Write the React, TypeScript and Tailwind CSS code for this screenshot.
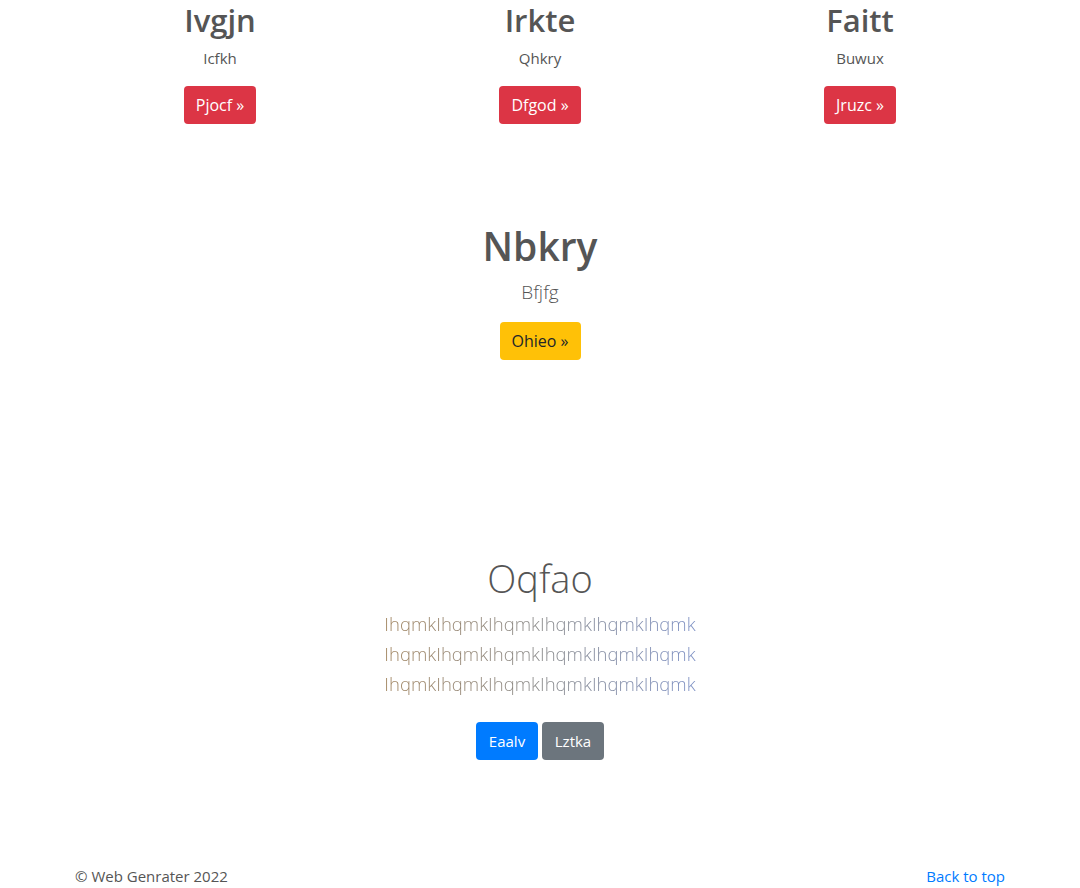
import React from 'react';

const features = [
  { title: 'Ivgjn', text: 'Icfkh', cta: 'Pjocf' },
  { title: 'Irkte', text: 'Qhkry', cta: 'Dfgod' },
  { title: 'Faitt', text: 'Buwux', cta: 'Jruzc' },
];

export default function App() {
  return (
    <div className="min-h-[888px] bg-white text-[#555] font-['Open_Sans',sans-serif] flex flex-col">
      {/* Feature columns */}
      <div className="mx-auto w-[960px] grid grid-cols-3">
        {features.map((f) => (
          <div key={f.title} className="flex flex-col items-center">
            <h2 className="text-[31px] font-semibold leading-[40px] text-[#555]">{f.title}</h2>
            <p className="mt-[6px] text-[15px] leading-6">{f.text}</p>
            <button className="mt-[16px] h-[38px] px-3 rounded bg-[#dc3545] text-white text-[16px]">
              {f.cta} &raquo;
            </button>
          </div>
        ))}
      </div>

      {/* Highlight */}
      <div className="mt-[96px] flex flex-col items-center">
        <h2 className="text-[39px] font-semibold leading-[52px] text-[#555]">Nbkry</h2>
        <p className="mt-[5px] text-[19px] font-light leading-[30px]">Bfjfg</p>
        <button className="mt-[15px] h-[38px] px-3 rounded bg-[#ffc107] text-[#212529] text-[16px]">
          Ohieo &raquo;
        </button>
      </div>

      {/* Jumbotron */}
      <div className="mt-[194px] flex flex-col items-center">
        <h1 className="text-[38px] font-light leading-[48px] text-[#555]">Oqfao</h1>
        <div className="mt-[7px] text-[18.5px] font-light leading-[30px] text-center bg-gradient-to-r from-[#a0835e] via-[#8a8a8a] to-[#7c8fc4] bg-clip-text text-transparent">
          <p>IhqmkIhqmkIhqmkIhqmkIhqmkIhqmk</p>
          <p>IhqmkIhqmkIhqmkIhqmkIhqmkIhqmk</p>
          <p>IhqmkIhqmkIhqmkIhqmkIhqmkIhqmk</p>
        </div>
        <div className="mt-[23px] flex gap-1">
          <button className="h-[38px] w-[62px] rounded bg-[#007bff] text-white text-[15px]">Eaalv</button>
          <button className="h-[38px] w-[62px] rounded bg-[#6c757d] text-white text-[15px]">Lztka</button>
        </div>
      </div>

      {/* Footer */}
      <footer className="mt-auto mx-auto w-[960px] px-[15px] flex justify-between text-[15px] leading-6">
        <p>&copy; Web Genrater 2022</p>
        <a href="#" className="text-[#007bff]">Back to top</a>
      </footer>
    </div>
  );
}
